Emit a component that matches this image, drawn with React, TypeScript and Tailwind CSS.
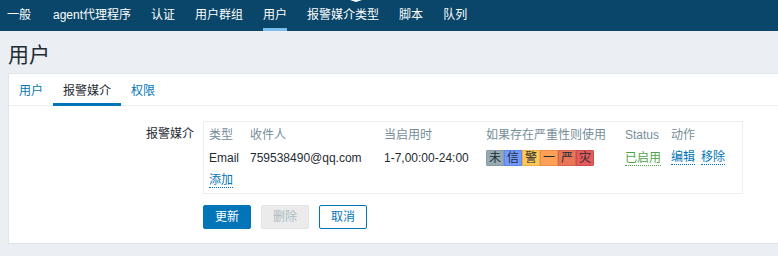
import React from "react"

const navItems = ["一般", "agent代理程序", "认证", "用户群组", "用户", "报警媒介类型", "脚本", "队列"]

const severities = [
  { label: "未", bg: "bg-[#97aab3]", border: "border-[#859ba5]" },
  { label: "信", bg: "bg-[#7499ff]", border: "border-[#5b86f4]" },
  { label: "警", bg: "bg-[#ffc859]", border: "border-[#e9b34a]" },
  { label: "一", bg: "bg-[#ffa059]", border: "border-[#e98d4a]" },
  { label: "严", bg: "bg-[#e97659]", border: "border-[#d2654b]" },
  { label: "灾", bg: "bg-[#e45959]", border: "border-[#cc4b4b]" },
]

function Link({ children }: { children: React.ReactNode }) {
  return (
    <span className="inline-block leading-[14px] text-[#0275b8] border-b border-dotted border-[#0275b8]">{children}</span>
  )
}

export default function App() {
  return (
    <div
      className="w-[778px] h-[256px] overflow-hidden bg-[#ebeef2] text-[12px] text-[#1f2c33]"
      style={{ fontFamily: '"Liberation Sans", Arial, "Noto Sans CJK SC", sans-serif' }}
    >
      {/* top sub nav */}
      <div className="relative h-[31px] bg-[#0a466a] flex items-stretch">
        <div className="absolute top-0 left-[350px] w-0 h-0 border-l-[6px] border-r-[6px] border-t-[2px] border-l-transparent border-r-transparent border-t-white" />
        {navItems.map((item, i) => (
          <div key={item} className={i === 0 ? "ml-[-3px] pl-[10px] pr-[12px]" : "px-[10px]"}>
            <div
              className={`h-full flex items-center pt-[2px] border-b-[3px] text-white ${
                i === 4 ? "border-[#7bbdeb]" : "border-transparent"
              }`}
            >
              {item}
            </div>
          </div>
        ))}
      </div>

      {/* page title */}
      <div className="pt-[13px] pb-[8px] pl-[8px] text-[21px] leading-[21px]">用户</div>

      {/* card */}
      <div className="ml-[8px] w-[800px] bg-white border border-[#dfe4e7] pb-[14px]">
        <div className="h-[32px] flex items-start border-b border-[#ebeef2]">
          {["用户", "报警媒介", "权限"].map((t, i) => (
            <div
              key={t}
              className={`h-[32px] px-[10px] pt-[5px] flex items-center border-b-[3px] ${
                i === 1 ? "border-[#0275b8] text-[#1f2c33]" : "border-transparent text-[#0275b8]"
              }`}
            >
              {t}
            </div>
          ))}
        </div>

        <div className="pt-[15px] flex">
          <div className="w-[185px] text-right mt-[2px] leading-[23px]">报警媒介</div>
          <div className="ml-[9px] flex flex-col">
            <div className="w-[540px] border border-[#ebeef2] pl-[5px] pt-[1px] pb-[1px]">
              <div className="h-[23px] flex items-center text-[#768d99]">
                <div className="w-[41px]">类型</div>
                <div className="w-[134px]">收件人</div>
                <div className="w-[102px]">当启用时</div>
                <div className="w-[139px]">如果存在严重性则使用</div>
                <div className="w-[46px]">Status</div>
                <div>动作</div>
              </div>
              <div className="h-[23px] flex items-center">
                <div className="w-[41px]">Email</div>
                <div className="w-[134px]">759538490@qq.com</div>
                <div className="w-[102px]">1-7,00:00-24:00</div>
                <div className="w-[139px] flex">
                  <div className="flex rounded-[2px] overflow-hidden">
                    {severities.map((s) => (
                      <div
                        key={s.label}
                        className={`w-[18px] h-[16px] flex items-center justify-center border ${s.bg} ${s.border} text-[#1f2c33] leading-none`}
                      >
                        {s.label}
                      </div>
                    ))}
                  </div>
                </div>
                <div className="w-[46px]">
                  <span className="inline-block leading-[14px] text-[#4fa448] border-b border-dotted border-[#4fa448]">
                    已启用
                  </span>
                </div>
                <div className="flex gap-[6px]">
                  <Link>编辑</Link>
                  <Link>移除</Link>
                </div>
              </div>
              <div className="h-[23px] flex items-center">
                <Link>添加</Link>
              </div>
            </div>

            <div className="mt-[11px] flex gap-[10px]">
              <button className="w-[48px] h-[24px] rounded-[2px] bg-[#0275b8] border border-[#0275b8] text-white">
                更新
              </button>
              <button className="w-[48px] h-[24px] rounded-[2px] bg-[#ebebeb] border border-[#dfe4e7] text-[#acbbc2]">
                删除
              </button>
              <button className="w-[48px] h-[24px] rounded-[2px] bg-white border border-[#0275b8] text-[#0275b8]">
                取消
              </button>
            </div>
          </div>
        </div>
      </div>
    </div>
  )
}
